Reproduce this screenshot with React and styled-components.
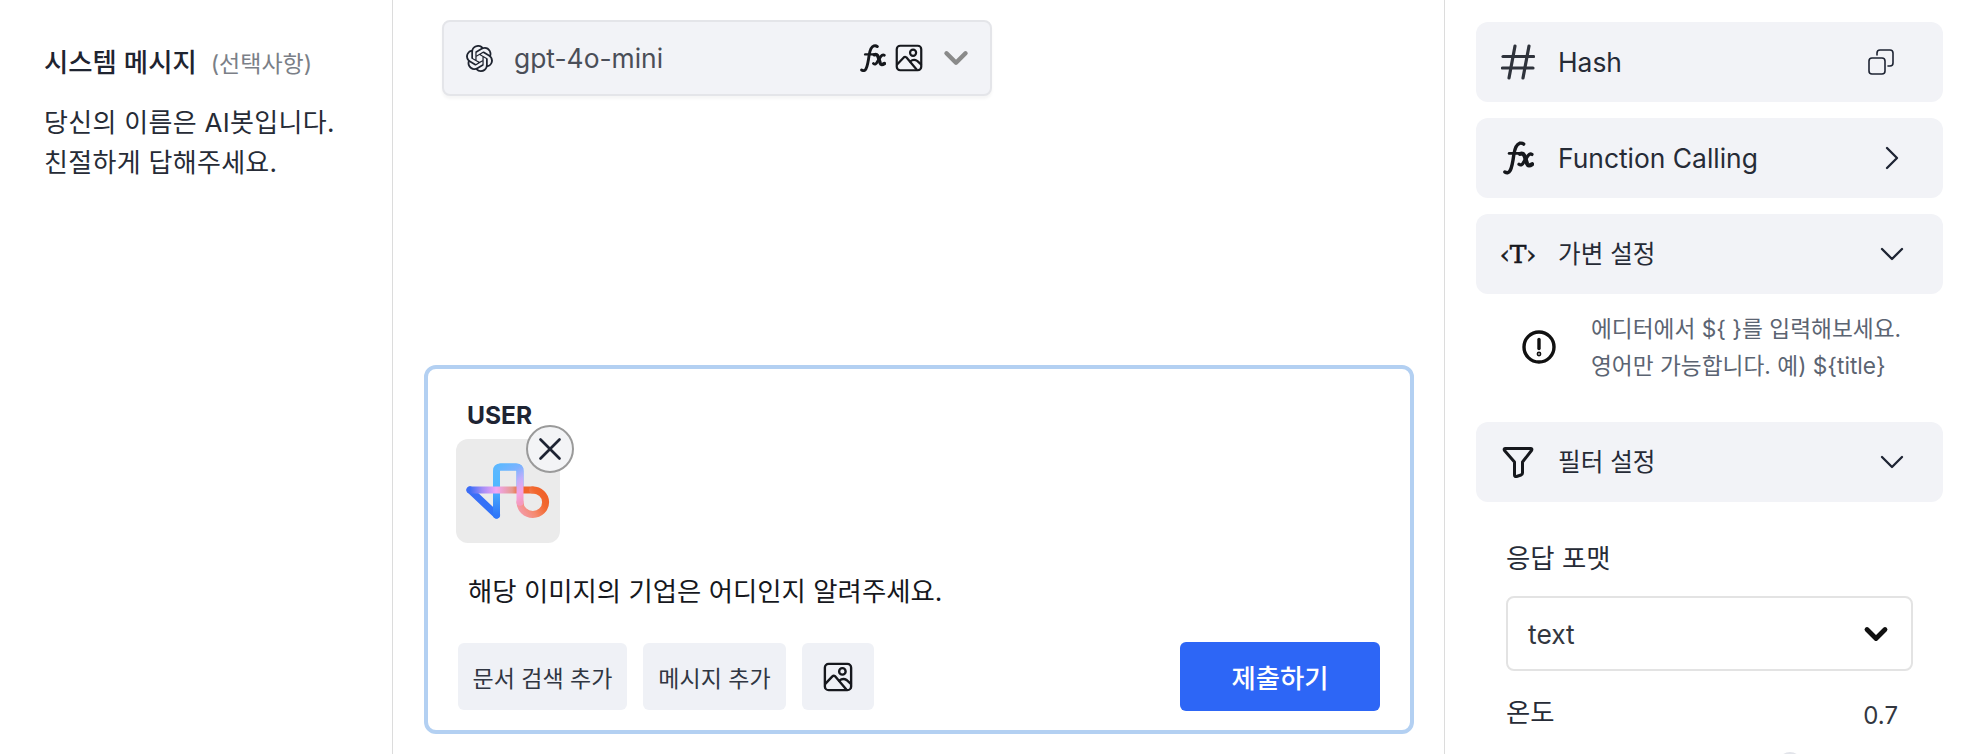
import React from "react";
import styled, { createGlobalStyle } from "styled-components";
import { SiOpenai } from "react-icons/si";
import { ChevronDown, ChevronRight, X } from "lucide-react";

const Global = createGlobalStyle`
  html, body { margin: 0; padding: 0; background: #fff; height: 754px; overflow: hidden; }
  * { box-sizing: border-box; }
  svg { flex: none; }
  body { font-family: Inter, "Noto Sans CJK KR", sans-serif; color: #1f2430; }
`;

const Page = styled.div`
  display: flex;
  width: 1964px;
  height: 754px;
  overflow: hidden;
`;

const LeftPanel = styled.aside`
  width: 393px;
  flex: none;
  padding: 41px 10px 0 44px;
  border-right: 1px solid #dcdcdc;
`;
const TitleRow = styled.div`
  display: flex;
  align-items: baseline;
  gap: 14px;
  height: 32px;
`;
const Title = styled.h2`
  margin: 0;
  font-size: 26.4px;
  font-weight: 500;
  color: #1f2430;
`;
const Optional = styled.span`
  font-size: 23px;
  color: #7b7f87;
`;
const SystemText = styled.p`
  margin: 30px 0 0;
  font-size: 26px;
  line-height: 40px;
  letter-spacing: 0.3px;
  color: #262b36;
`;

const Center = styled.main`
  flex: 1;
  display: flex;
  flex-direction: column;
  justify-content: space-between;
  padding: 20px 30px 20px 31px;
  border-right: 1px solid #dcdcdc;
`;
const ModelSelect = styled.div`
  display: flex;
  align-items: center;
  width: 550px;
  height: 76px;
  margin-left: 18px;
  padding: 0 15px 0 22px;
  background: #f2f3f7;
  border: 2px solid #e4e5e9;
  border-radius: 8px;
  box-shadow: 0 3px 3px rgba(0, 0, 0, 0.04);
`;
const ModelName = styled.span`
  margin-left: 21px;
  font-size: 26.4px;
  color: #4a4e58;
  flex: 1;
`;
const ModelIcons = styled.div`
  display: flex;
  align-items: center;
  gap: 9px;
  margin-right: 14px;
`;

const Composer = styled.section`
  display: flex;
  flex-direction: column;
  border: 4px solid #b3d0f2;
  border-radius: 12px;
  padding: 32px 30px 19px 28px;
`;
const RoleLabel = styled.div`
  margin-left: 11px;
  height: 28px;
  line-height: 28px;
  font-size: 24.6px;
  font-weight: 700;
  color: #1e2433;
`;
const Thumb = styled.div`
  position: relative;
  width: 104px;
  height: 104px;
  margin-top: 10px;
  border-radius: 12px;
  background: #ebebeb;
`;
const CloseButton = styled.button`
  position: absolute;
  top: -14px;
  right: -14px;
  width: 48px;
  height: 48px;
  padding: 0;
  display: flex;
  align-items: center;
  justify-content: center;
  border-radius: 50%;
  border: 2px solid #9a9a9a;
  background: #f3f4f6;
  color: #1e2433;
`;
const Message = styled.p`
  margin: 30px 0 33px 12px;
  font-size: 26.4px;
  line-height: 36px;
  color: #16181d;
`;
const Actions = styled.div`
  display: flex;
  align-items: center;
  gap: 16px;
  margin-left: 2px;
`;
const GhostButton = styled.button`
  height: 67px;
  padding: 0;
  border: 0;
  border-radius: 6px;
  background: #eff1f6;
  color: #303642;
  font: inherit;
  font-size: 23px;
  white-space: nowrap;
  display: flex;
  align-items: center;
  justify-content: center;
  width: ${(p) => p.$width}px;
`;
const SubmitButton = styled.button`
  margin-left: auto;
  width: 200px;
  height: 69px;
  border: 0;
  border-radius: 6px;
  background: #2d66f6;
  color: #fff;
  font: inherit;
  font-size: 26.4px;
  font-weight: 500;
`;

const RightPanel = styled.aside`
  width: 519px;
  flex: none;
  display: flex;
  flex-direction: column;
  gap: 16px;
  padding: 22px 21px 0 31px;
`;
const Row = styled.div`
  display: flex;
  align-items: center;
  height: 80px;
  flex: none;
  padding: 0 37px 0 24px;
  background: #f2f3f7;
  border-radius: 12px;
`;
const RowIcon = styled.div`
  width: 36px;
  display: flex;
  align-items: center;
  justify-content: center;
  flex: none;
  color: #2a2e38;
`;
const RowLabel = styled.span`
  flex: 1;
  margin-left: 22px;
  font-size: ${(p) => (p.$ko ? 24.6 : 26.4)}px;
  padding-bottom: ${(p) => (p.$ko ? 5 : 0)}px;
  color: #262b36;
`;
const RowAction = styled.div`
  width: 28px;
  display: flex;
  align-items: center;
  justify-content: center;
  color: #1e2433;
`;
const CopyWrap = styled.div`
  display: flex;
  margin-right: 12px;
`;
const VarGlyph = styled.span`
  font-family: "DejaVu Serif", serif;
  font-size: 25px;
  line-height: 1;
  color: #16181d;
  white-space: nowrap;
  -webkit-text-stroke: 0.6px #16181d;
`;
const Hint = styled.div`
  display: flex;
  align-items: center;
  gap: 35px;
  padding-left: 46px;
  margin-bottom: 22px;
`;
const HintText = styled.p`
  margin: 0;
  font-size: 22.7px;
  line-height: 37px;
  color: #5b6472;
  white-space: nowrap;
`;
const Settings = styled.div`
  display: flex;
  flex-direction: column;
  padding: 22px 30px 0;
`;
const FieldLabel = styled.label`
  font-size: 26.4px;
  line-height: 36px;
  color: #262b36;
`;
const SelectBox = styled.div`
  display: flex;
  align-items: center;
  justify-content: space-between;
  height: 75px;
  margin: 20px 0 23px;
  padding: 0 17px 0 20px;
  border: 2px solid #e3e3e3;
  border-radius: 8px;
  font-size: 26.4px;
  color: #33373f;
`;
const ValueRow = styled.div`
  display: flex;
  justify-content: space-between;
  align-items: flex-start;
  padding-right: 15px;
`;
const ValueText = styled.span`
  margin-top: 4px;
  font-size: 24px;
  line-height: 36px;
  color: #33373f;
`;
const Slider = styled.div`
  position: relative;
  height: 24px;
  margin-top: 18px;
`;
const SliderThumb = styled.div`
  position: absolute;
  left: 272px;
  top: 0;
  width: 24px;
  height: 24px;
  border-radius: 50%;
  background: #e2e4ea;
`;

const ImageIcon = ({ size = 26 }) => (
  <svg width={size} height={size} viewBox="0 0 24 24" fill="none" stroke="#16181d" strokeWidth="1.9" strokeLinejoin="round" strokeLinecap="round">
    <rect x="1.5" y="1.5" width="21" height="21" rx="3" />
    <circle cx="15.5" cy="7.5" r="2.6" />
    <path d="M1.8 17.5 L7.5 11.5 Q8.5 10.6 9.7 11.4 L18.5 21.8" />
    <path d="M13 15 Q16 12.6 19 14.5 L22.3 17.5" />
  </svg>
);

const FxIcon = ({ width = 30 }) => (
  <svg width={width} height={width * 1.1} viewBox="0 0 30 33" fill="none" stroke="#16181d" strokeLinecap="round" strokeLinejoin="round">
    <path d="M1.8 30 Q5 32 7 28.5 Q9 24.5 10.5 13 Q12 3.5 16 2.2 Q18.5 1.6 20 3" strokeWidth="3.3" />
    <path d="M6 12 H17" strokeWidth="2.8" />
    <path d="M16.5 12.5 Q19.8 11.2 21 15 L23.3 22 Q24.5 25 28.2 22.5" strokeWidth="4" />
    <path d="M28 13 Q25.5 11.5 23 16 L20 20.5 Q18 24.5 15.5 22.5" strokeWidth="3.2" />
  </svg>
);

const HashIcon = () => (
  <svg width="34" height="36" viewBox="0 0 34 36" fill="none" stroke="#2f333c" strokeWidth="3.2" strokeLinecap="round">
    <path d="M2 12.5 H32.5" />
    <path d="M1.5 24 H32" />
    <path d="M14 2 L8 34" />
    <path d="M28 2 L22 34" />
  </svg>
);

const CopyIcon = () => (
  <svg width="26" height="26" viewBox="0 0 26 26" fill="none" stroke="#1e2433" strokeWidth="1.6" strokeLinejoin="round" strokeLinecap="round">
    <rect x="1" y="9" width="16" height="16" rx="3" />
    <path d="M9 6 V4 Q9 1 12 1 H22 Q25 1 25 4 V14 Q25 17 22 17 H20" />
  </svg>
);

const FunnelIcon = () => (
  <svg width="32" height="32" viewBox="0 0 32 32" fill="none" stroke="#16181d" strokeWidth="3" strokeLinejoin="round" strokeLinecap="round">
    <path d="M3 2.5 H29 Q30.5 2.5 29.5 4.5 L20.5 16 V27 Q20.5 28.5 19 29 L14.5 30.5 Q12.5 31 12.5 29 V16 L2.5 4.5 Q1.6 2.5 3 2.5 Z" />
  </svg>
);

const AlertIcon = () => (
  <svg width="34" height="34" viewBox="0 0 34 34" fill="none" stroke="#111" strokeWidth="3.4" strokeLinecap="round">
    <circle cx="17" cy="17" r="15" />
    <path d="M17 9.5 V18.5" />
    <circle cx="17" cy="24" r="0.7" fill="#111" />
  </svg>
);

const BrandMark = () => (
  <svg width="104" height="104" viewBox="0 0 104 104" fill="none" strokeWidth="7" strokeLinecap="round" strokeLinejoin="round">
    <defs>
      <linearGradient id="lgDiag" gradientUnits="userSpaceOnUse" x1="14" y1="51" x2="40" y2="76">
        <stop offset="0" stopColor="#3c6df6" />
        <stop offset="1" stopColor="#2f74f8" />
      </linearGradient>
      <linearGradient id="lgUp" gradientUnits="userSpaceOnUse" x1="40" y1="76" x2="40" y2="28">
        <stop offset="0" stopColor="#2f78f8" />
        <stop offset="0.6" stopColor="#52b8ff" />
        <stop offset="1" stopColor="#5cb8ff" />
      </linearGradient>
      <linearGradient id="lgTop" gradientUnits="userSpaceOnUse" x1="40" y1="28" x2="64" y2="64">
        <stop offset="0" stopColor="#5cb8ff" />
        <stop offset="0.3" stopColor="#7eb2ff" />
        <stop offset="0.55" stopColor="#c3adfb" />
        <stop offset="0.8" stopColor="#f4a4e6" />
        <stop offset="1" stopColor="#f49ac0" />
      </linearGradient>
      <linearGradient id="lgHoriz" gradientUnits="userSpaceOnUse" x1="14" y1="51" x2="76" y2="51">
        <stop offset="0" stopColor="#3c6df6" />
        <stop offset="0.2" stopColor="#a28cf6" />
        <stop offset="0.42" stopColor="#f3a6f5" />
        <stop offset="0.68" stopColor="#e59a90" />
        <stop offset="0.8" stopColor="#f0622a" />
        <stop offset="1" stopColor="#f0662c" />
      </linearGradient>
      <linearGradient id="lgRing" gradientUnits="userSpaceOnUse" x1="64" y1="74" x2="90" y2="58">
        <stop offset="0" stopColor="#f49aa8" />
        <stop offset="0.4" stopColor="#f58a70" />
        <stop offset="0.8" stopColor="#f2682e" />
        <stop offset="1" stopColor="#f0622a" />
      </linearGradient>
    </defs>
    <path d="M40.5 76 L14 51" stroke="url(#lgDiag)" />
    <path d="M40.5 76 V32 Q40.5 28 44.5 28 H60 Q64 28 64 32 V51" stroke="url(#lgUp)" />
    <path d="M14 51 H76.7" stroke="url(#lgHoriz)" />
    <path d="M76.7 51 A12.8 12.2 0 1 1 64 63.3" stroke="url(#lgRing)" />
    <path d="M44.5 28 H60 Q64 28 64 32 V63.3" stroke="url(#lgTop)" />
  </svg>
);

export default function App() {
  return (
    <Page>
      <Global />
      <LeftPanel>
        <TitleRow>
          <Title>시스템 메시지</Title>
          <Optional>(선택사항)</Optional>
        </TitleRow>
        <SystemText>
          당신의 이름은 AI봇입니다.
          <br />
          친절하게 답해주세요.
        </SystemText>
      </LeftPanel>

      <Center>
        <ModelSelect>
          <SiOpenai size={27} color="#1f2430" />
          <ModelName>gpt-4o-mini</ModelName>
          <ModelIcons>
            <FxIcon width={26} />
            <ImageIcon size={28} />
          </ModelIcons>
          <ChevronDown size={38} color="#8a8a8a" strokeWidth={2.8} />
        </ModelSelect>

        <Composer>
          <RoleLabel>USER</RoleLabel>
          <Thumb>
            <BrandMark />
            <CloseButton aria-label="제거">
              <X size={38} strokeWidth={1.7} />
            </CloseButton>
          </Thumb>
          <Message>해당 이미지의 기업은 어디인지 알려주세요.</Message>
          <Actions>
            <GhostButton $width={169}>문서 검색 추가</GhostButton>
            <GhostButton $width={143}>메시지 추가</GhostButton>
            <GhostButton $width={72}>
              <ImageIcon size={30} />
            </GhostButton>
            <SubmitButton>제출하기</SubmitButton>
          </Actions>
        </Composer>
      </Center>

      <RightPanel>
        <Row>
          <RowIcon>
            <HashIcon />
          </RowIcon>
          <RowLabel>Hash</RowLabel>
          <CopyWrap>
            <CopyIcon />
          </CopyWrap>
        </Row>
        <Row>
          <RowIcon>
            <FxIcon width={31} />
          </RowIcon>
          <RowLabel>Function Calling</RowLabel>
          <RowAction>
            <ChevronRight size={40} strokeWidth={1.4} />
          </RowAction>
        </Row>
        <Row>
          <RowIcon>
            <VarGlyph>‹T›</VarGlyph>
          </RowIcon>
          <RowLabel $ko>가변 설정</RowLabel>
          <RowAction>
            <ChevronDown size={40} strokeWidth={1.4} />
          </RowAction>
        </Row>
        <Hint>
          <AlertIcon />
          <HintText>
            에디터에서 $&#123; &#125;를 입력해보세요.
            <br />
            영어만 가능합니다. 예) $&#123;title&#125;
          </HintText>
        </Hint>
        <Row>
          <RowIcon>
            <FunnelIcon />
          </RowIcon>
          <RowLabel $ko>필터 설정</RowLabel>
          <RowAction>
            <ChevronDown size={40} strokeWidth={1.4} />
          </RowAction>
        </Row>
        <Settings>
          <FieldLabel>응답 포맷</FieldLabel>
          <SelectBox>
            text
            <ChevronDown size={36} color="#111" strokeWidth={3.2} />
          </SelectBox>
          <ValueRow>
            <FieldLabel>온도</FieldLabel>
            <ValueText>0.7</ValueText>
          </ValueRow>
          <Slider>
            <SliderThumb />
          </Slider>
        </Settings>
      </RightPanel>
    </Page>
  );
}
